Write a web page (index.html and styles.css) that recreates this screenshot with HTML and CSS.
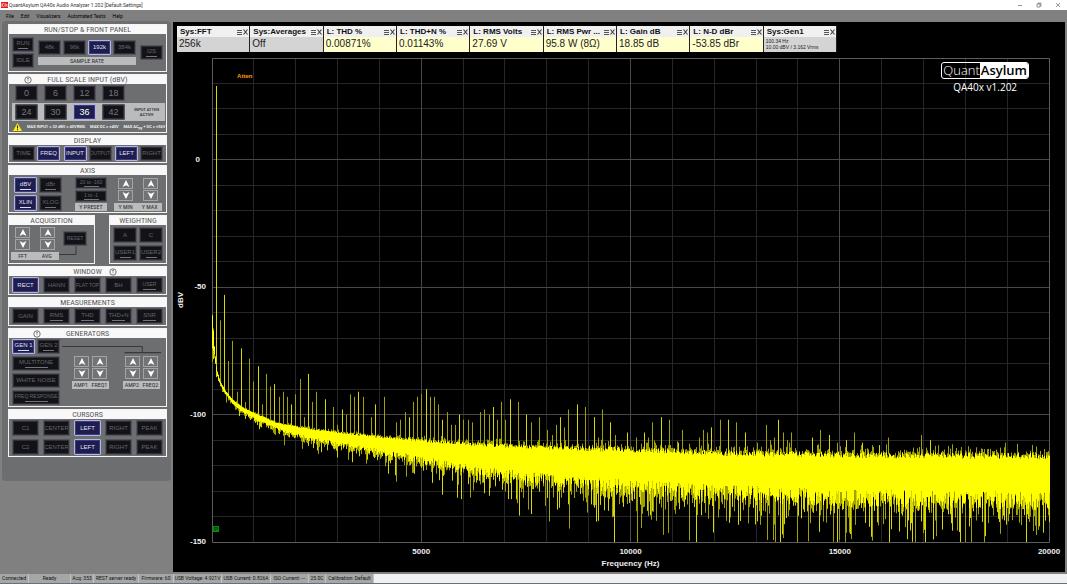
FILE: index.html
```html
<!DOCTYPE html>
<html lang="en">
  <head>
    <meta charset="UTF-8" />
    <meta name="viewport" content="width=device-width, initial-scale=1" />
    <title>QuantAsylum QA40x Audio Analyzer 1.202 [Default.Settings]</title>
    <link rel="stylesheet" href="styles.css" />
  </head>
  <body>
    <!-- shared icons -->
    <svg class="defs" aria-hidden="true">
      <symbol id="up" viewBox="0 0 8 8"><path d="M4 0L8 8L4 6L0 8Z" fill="#fff" /></symbol>
      <symbol id="down" viewBox="0 0 8 8"><path d="M4 8L8 0L4 2L0 0Z" fill="#fff" /></symbol>
      <symbol id="knob" viewBox="0 0 8 8">
        <circle cx="4" cy="4" r="3.2" fill="none" stroke="#666" stroke-width="0.9" />
        <path d="M4 2V5.2M3 2.4H5" stroke="#777" stroke-width="0.7" fill="none" />
      </symbol>
      <symbol id="menuicon" viewBox="0 0 5 6"><path d="M0 1.5H5M0 3.5H5M0 5.5H5" stroke="#555" /></symbol>
      <symbol id="closeicon" viewBox="0 0 5 6"><path d="M0.5 0.5L4.5 5.5M4.5 0.5L0.5 5.5" stroke="#444" stroke-width="1.2" /></symbol>
    </svg>

    <header class="titlebar">
      <svg class="app-icon" viewBox="0 0 7 6" aria-hidden="true">
        <rect width="7" height="6" fill="#e01818" />
        <path d="M1 1V5M1 3L3 1M1 3L3 5M4 1V5M6 2V5M4 3H6" stroke="#fff" stroke-width="0.6" fill="none" />
      </svg>
      <span class="app-title">QuantAsylum QA40x Audio Analyzer 1.202 [Default.Settings]</span>
      <button class="win" aria-label="Minimize"><svg viewBox="0 0 6 6"><path d="M1 3.5H5" /></svg></button>
      <button class="win" aria-label="Restore"><svg viewBox="0 0 6 6"><path d="M1 2H4V5H1ZM2 2V1H5V4H4" /></svg></button>
      <button class="win" aria-label="Close"><svg viewBox="0 0 6 6"><path d="M1 1L5 5M5 1L1 5" /></svg></button>
    </header>

    <nav class="menubar">
      <a href="#">File</a>
      <a href="#">Edit</a>
      <a href="#">Visualizers</a>
      <a href="#">Automated Tests</a>
      <a href="#">Help</a>
    </nav>

    <main class="workspace">
      <aside class="sidebar">
        <section class="group">
          <h2><span>RUN/STOP &amp; FRONT PANEL</span></h2>
          <div class="body run">
            <div class="stack">
              <button class="btn led">RUN</button>
              <button class="btn">IDLE</button>
            </div>
            <div class="rates">
              <button class="btn">48k</button>
              <button class="btn">96k</button>
              <button class="btn on">192k</button>
              <button class="btn">384k</button>
              <span class="tag">SAMPLE RATE</span>
            </div>
            <button class="btn led">I2S</button>
          </div>
        </section>

        <section class="group">
          <h2><svg class="knob"><use href="#knob" /></svg><span>FULL SCALE INPUT (dBV)</span></h2>
          <div class="body full">
            <div class="ranges">
              <button class="btn big">0</button>
              <button class="btn big">6</button>
              <button class="btn big">12</button>
              <button class="btn big">18</button>
            </div>
            <div class="ranges atten">
              <button class="btn big">24</button>
              <button class="btn big">30</button>
              <button class="btn big on">36</button>
              <button class="btn big">42</button>
              <span class="atten-note">INPUT ATTEN<br />ACTIVE</span>
            </div>
            <div class="warning">
              <svg viewBox="0 0 9 8"><path d="M4.5 0L9 8H0Z" fill="#ffef00" /><path d="M4.5 2.5V5.5M4.5 6.2V7.2" stroke="#222" /></svg>
              <span>MAX INPUT = 32 dBV = 40VRMS</span>
              <span>MAX DC = ±40V</span>
              <span>MAX AC<sub>PK</sub> + DC = ±56V</span>
            </div>
          </div>
        </section>

        <section class="group">
          <h2><span>DISPLAY</span></h2>
          <div class="body display">
            <div class="pair"><button class="btn">TIME</button><button class="btn on">FREQ</button></div>
            <div class="pair"><button class="btn on">INPUT</button><button class="btn small">OUTPUT</button></div>
            <div class="pair"><button class="btn on">LEFT</button><button class="btn">RIGHT</button></div>
          </div>
        </section>

        <section class="group">
          <h2><span>AXIS</span></h2>
          <div class="body axis">
            <div class="quad">
              <button class="btn on led">dBV</button>
              <button class="btn led">dBr</button>
              <button class="btn on led">XLIN</button>
              <button class="btn led">XLOG</button>
            </div>
            <div class="presets">
              <button class="btn led">20 to -160</button>
              <button class="btn led">1 to -1</button>
              <span class="tag">Y PRESET</span>
            </div>
            <div class="spinners wide">
              <button class="arrow" aria-label="Y min up"><svg><use href="#up" /></svg></button>
              <button class="arrow" aria-label="Y max up"><svg><use href="#up" /></svg></button>
              <button class="arrow" aria-label="Y min down"><svg><use href="#down" /></svg></button>
              <button class="arrow" aria-label="Y max down"><svg><use href="#down" /></svg></button>
              <span class="tag"><i>Y MIN</i><i>Y MAX</i></span>
            </div>
          </div>
        </section>

        <div class="split">
          <section class="group">
            <h2><span>ACQUISITION</span></h2>
            <div class="body acq">
              <div class="spinners wide">
                <button class="arrow" aria-label="FFT up"><svg><use href="#up" /></svg></button>
                <button class="arrow" aria-label="Averages up"><svg><use href="#up" /></svg></button>
                <button class="arrow" aria-label="FFT down"><svg><use href="#down" /></svg></button>
                <button class="arrow" aria-label="Averages down"><svg><use href="#down" /></svg></button>
                <span class="tag"><i>FFT</i><i>AVG</i></span>
              </div>
              <div class="reset">
                <button class="btn small">RESET</button>
                <svg class="wire" viewBox="0 0 28 12"><path d="M17 0V8.5H0" /></svg>
              </div>
            </div>
          </section>
          <section class="group">
            <h2><span>WEIGHTING</span></h2>
            <div class="body weighting">
              <button class="btn">A</button>
              <button class="btn">C</button>
              <button class="btn led">USER1</button>
              <button class="btn led">USER2</button>
            </div>
          </section>
        </div>

        <section class="group">
          <h2><span>WINDOW</span><svg class="knob after"><use href="#knob" /></svg></h2>
          <div class="body five">
            <button class="btn on">RECT</button>
            <button class="btn">HANN</button>
            <button class="btn small">FLAT TOP</button>
            <button class="btn">BH</button>
            <button class="btn small led">USER</button>
          </div>
        </section>

        <section class="group">
          <h2><span>MEASUREMENTS</span></h2>
          <div class="body five">
            <button class="btn">GAIN</button>
            <button class="btn led">RMS</button>
            <button class="btn led">THD</button>
            <button class="btn led">THD+N</button>
            <button class="btn led">SNR</button>
          </div>
        </section>

        <section class="group">
          <h2><svg class="knob"><use href="#knob" /></svg><span>GENERATORS</span></h2>
          <div class="body generators">
            <div class="gen-buttons">
              <button class="btn on led">GEN 1</button>
              <button class="btn led">GEN 2</button>
              <button class="btn led long">MULTITONE</button>
              <button class="btn long">WHITE NOISE</button>
              <button class="btn led small long">FREQ RESPONSE</button>
            </div>
            <div class="gen-levels">
              <svg class="wire" viewBox="0 0 102 15"><path d="M2 7.5H81.5V13.5M64 13.5H100" /></svg>
              <div class="levels">
                <div class="spinners">
                  <button class="arrow" aria-label="Amp 1 up"><svg><use href="#up" /></svg></button>
                  <button class="arrow" aria-label="Freq 1 up"><svg><use href="#up" /></svg></button>
                  <button class="arrow" aria-label="Amp 1 down"><svg><use href="#down" /></svg></button>
                  <button class="arrow" aria-label="Freq 1 down"><svg><use href="#down" /></svg></button>
                  <span class="tag"><i>AMP1</i><i>FREQ1</i></span>
                </div>
                <div class="spinners">
                  <button class="arrow" aria-label="Amp 2 up"><svg><use href="#up" /></svg></button>
                  <button class="arrow" aria-label="Freq 2 up"><svg><use href="#up" /></svg></button>
                  <button class="arrow" aria-label="Amp 2 down"><svg><use href="#down" /></svg></button>
                  <button class="arrow" aria-label="Freq 2 down"><svg><use href="#down" /></svg></button>
                  <span class="tag"><i>AMP2</i><i>FREQ2</i></span>
                </div>
              </div>
            </div>
          </div>
        </section>

        <section class="group">
          <h2><span>CURSORS</span></h2>
          <div class="body five">
            <button class="btn">C1</button>
            <button class="btn">CENTER</button>
            <button class="btn on">LEFT</button>
            <button class="btn">RIGHT</button>
            <button class="btn">PEAK</button>
            <button class="btn">C2</button>
            <button class="btn">CENTER</button>
            <button class="btn on">LEFT</button>
            <button class="btn">RIGHT</button>
            <button class="btn">PEAK</button>
          </div>
        </section>
      </aside>

      <section class="display-area">
        <div class="meters" id="meters"></div>
        <svg class="chart" id="chart" role="img" aria-label="Spectrum, dBV over frequency"></svg>
        <div class="brand">
          <div class="logo"><span>Quant</span><b>Asylum</b></div>
          <div class="version">QA40x v1.202</div>
        </div>
      </section>
    </main>

    <footer class="statusbar">
      <div class="cells">
        <span>Connected</span>
        <span>Ready</span>
        <span>Acq: 353</span>
        <span>REST server ready</span>
        <span>Firmware: 60</span>
        <span>USB Voltage: 4.921V</span>
        <span>USB Current: 0.826A</span>
        <span>ISO Current: ---</span>
        <span>25.0C</span>
        <span>Calibration: Default</span>
      </div>
    </footer>

    <script src="chart.js"></script>
  </body>
</html>
```
FILE: styles.css
```css
* {
  box-sizing: border-box;
}

body {
  margin: 0;
  min-height: 100vh;
  display: flex;
  flex-direction: column;
  background: #808080;
  font-family: Roboto, "Liberation Sans", sans-serif;
  font-size: 5px;
  color: #111;
}

button {
  font: inherit;
  padding: 0;
  margin: 0;
}

.defs {
  display: none;
}

/* window chrome */
.titlebar {
  display: flex;
  align-items: center;
  height: 10px;
  padding: 0 5px 0 1px;
  background: #fff;
}

.app-icon {
  width: 7px;
  height: 6px;
}

.app-title {
  flex: 1;
  margin-left: 1px;
  color: #333;
}

.win {
  width: 8px;
  height: 8px;
  margin-left: 11px;
  border: none;
  background: none;
  display: flex;
  align-items: center;
  justify-content: center;
}

.win svg {
  width: 6px;
  height: 6px;
  fill: none;
  stroke: #555;
  stroke-width: 0.6;
}

.menubar {
  display: flex;
  align-items: center;
  gap: 7px;
  height: 11px;
  padding-left: 6px;
}

.menubar a {
  color: #000;
  text-decoration: none;
}

.workspace {
  flex: 1;
  display: flex;
  align-items: stretch;
}

/* control panel */
.sidebar {
  flex: none;
  align-self: flex-start;
  width: 169px;
  margin: 0 2px;
  padding: 3px 4px 24px 6px;
  display: flex;
  flex-direction: column;
  gap: 2px;
  background: #6c6e70;
  border-radius: 4px;
}

.group {
  border: 1px solid #f4f4f4;
}

.group h2 {
  display: grid;
  grid-template-columns: 1fr auto 1fr;
  align-items: center;
  height: 9px;
  margin: 0;
  background: #f8f8f8;
  color: #58595b;
  font-family: "Roboto Condensed", Roboto, sans-serif;
  font-size: 8px;
  font-weight: 400;
  line-height: 9px;
}

.group h2 span {
  grid-column: 2;
  white-space: nowrap;
}

.knob {
  grid-column: 1;
  grid-row: 1;
  justify-self: center;
  width: 8px;
  height: 8px;
}

.knob.after {
  grid-column: 3;
  justify-self: start;
  margin-left: 7px;
}

.btn {
  height: 15px;
  border: 1px solid #54545e;
  outline: 1px solid #2e2e38;
  outline-offset: -2px;
  border-radius: 1px;
  background: #131317;
  color: #64666c;
  font-family: "Liberation Sans", sans-serif;
  font-size: 6px;
  line-height: 7px;
  white-space: nowrap;
  display: flex;
  flex-direction: column;
  align-items: center;
  justify-content: center;
  overflow: hidden;
  cursor: pointer;
}

.btn.on {
  border-color: #b4b4e4;
  outline-color: #3c3c7c;
  background: #1d1d4e;
  color: #e2e2f4;
}

.btn.led::after {
  content: "";
  width: 50%;
  height: 1px;
  margin-top: 1px;
  background: #74747c;
}

.btn.on.led::after {
  background: #dcdcf4;
}

.btn.small {
  font-size: 5px;
}

.btn.big {
  height: 16px;
  font-size: 9px;
  line-height: 10px;
  color: #74767c;
}

.btn.big.on {
  color: #fff;
}

.tag {
  display: flex;
  align-items: center;
  justify-content: space-around;
  height: 8px;
  background: #b9bbbd;
  color: #2c2e30;
  font-family: "Roboto Condensed", Roboto, sans-serif;
  font-size: 6px;
  line-height: 8px;
}

.tag i {
  font-style: normal;
}

.body {
  padding: 1px 3px;
}

.run {
  display: grid;
  grid-template-columns: 22px 98px 23px;
  justify-content: space-between;
  align-items: center;
  padding: 3px;
}

.stack {
  display: grid;
  gap: 1px;
}

.rates {
  display: grid;
  grid-template-columns: repeat(4, 1fr);
  gap: 2px;
}

.rates .tag {
  grid-column: 1 / -1;
}

.full {
  display: grid;
  gap: 2px;
}

.ranges {
  display: grid;
  grid-template-columns: repeat(4, 23px) 1fr;
  column-gap: 6px;
  padding: 0 3px;
}

.atten {
  padding: 1px 3px;
  background: #b9bbbd;
}

.atten-note {
  align-self: center;
  justify-self: center;
  text-align: center;
  white-space: nowrap;
  color: #222;
  font-size: 4px;
  font-weight: 500;
  line-height: 5px;
}

.warning {
  display: flex;
  align-items: center;
  gap: 5px;
  height: 8px;
  padding-left: 1px;
  color: #fff;
  font-size: 4px;
  font-weight: 500;
  line-height: 8px;
  white-space: nowrap;
}

.warning svg {
  flex: none;
  width: 9px;
  height: 8px;
}

.warning sub {
  font-size: 3px;
  line-height: 1px;
}

.display {
  display: flex;
  justify-content: space-between;
}

.pair {
  display: grid;
  grid-template-columns: 23px 23px;
  gap: 2px;
}

.axis {
  display: flex;
  align-items: center;
  padding: 2px 4px 1px 5px;
}

.quad {
  display: grid;
  grid-template-columns: 23px 23px;
  gap: 2px;
}

.quad .btn {
  height: 16px;
}

.presets {
  display: grid;
  gap: 1px;
  width: 32px;
  margin-left: 13px;
}

.presets .btn {
  height: 12px;
  font-size: 5px;
  line-height: 6px;
}

.spinners {
  display: grid;
  grid-template-columns: 15px 15px;
  justify-content: center;
  gap: 1px 3px;
  width: 37px;
}

.spinners.wide {
  width: 48px;
  column-gap: 10px;
}

.axis .spinners {
  margin-left: auto;
}

/* the label strip runs a little past the arrows on both sides */
.spinners .tag {
  grid-column: 1 / -1;
  margin: 1px -2px 0;
}

.spinners.wide .tag {
  margin: 1px -4px 0;
}

.arrow {
  display: flex;
  align-items: center;
  justify-content: center;
  height: 11px;
  border: 1px solid #a2a4a6;
  background: #717375;
  cursor: pointer;
}

.arrow svg {
  width: 8px;
  height: 7px;
}

.split {
  display: grid;
  grid-template-columns: 87px 58px;
  justify-content: space-between;
}

.acq {
  display: flex;
  padding: 2px;
}

.reset {
  width: 28px;
  padding-top: 4px;
}

.reset .btn {
  width: 24px;
  margin-left: 4px;
}

.wire {
  display: block;
  width: 100%;
  fill: none;
  stroke: #38393b;
}

.weighting {
  display: grid;
  grid-template-columns: 1fr 1fr;
  gap: 2px;
  padding: 2px 3px;
}

.weighting .btn {
  height: 16px;
}

.five {
  display: grid;
  grid-template-columns: repeat(5, 1fr);
  gap: 3px 4px;
}

.five .btn {
  height: 16px;
}

.generators {
  display: grid;
  grid-template-columns: 48px 1fr;
}

.gen-buttons {
  display: grid;
  grid-template-columns: 1fr 1fr;
  gap: 2px;
}

.gen-buttons .long {
  grid-column: 1 / -1;
}

.levels {
  display: flex;
  justify-content: space-between;
  padding: 2px 3px 0 12px;
}

/* measurements and plot */
.display-area {
  position: relative;
  flex: 1;
  min-width: 0;
  margin: 1px 2px 2px 0;
  display: flex;
  flex-direction: column;
  background: #000;
}

.meters {
  display: grid;
  grid-template-columns: repeat(9, minmax(0, 74fr)) 227fr;
  padding: 4px 3px 0 4px;
}

.meter {
  height: 26px;
  background: #ffffcc;
  border-right: 1px solid #222;
  font-family: "Liberation Sans", sans-serif;
}

.meter.sys {
  background: #d4d4d4;
}

.meter-head {
  display: flex;
  align-items: center;
  gap: 1px;
  height: 11px;
  padding: 0 1px 0 3px;
  background: #f0f0f0;
  font-size: 8px;
  font-weight: 700;
  line-height: 11px;
  white-space: nowrap;
}

.meter-head span {
  flex: 1;
}

.meter-head button {
  display: flex;
  border: none;
  background: none;
}

.meter-head svg {
  width: 5px;
  height: 6px;
}

.meter-value {
  padding-left: 2px;
  font-size: 10px;
  line-height: 13px;
  color: #222;
}

.meter-value.fine {
  font-size: 5px;
  line-height: 6px;
  padding-top: 1px;
}

.chart {
  flex: 1;
  width: 100%;
  min-height: 200px;
  display: block;
  font-family: "Liberation Sans", sans-serif;
  font-size: 8px;
  font-weight: 700;
}

.chart text {
  fill: #eee;
}

.chart .grid {
  stroke: #262626;
}

.chart .grid.major {
  stroke: #484848;
}

.chart .grid.frame {
  stroke: #5c5c5c;
}

.chart .band {
  stroke: #ffff00;
}

.chart .tail {
  stroke: #a0a000;
}

.chart .tail.bright {
  stroke: #d8d800;
}

.chart .marker {
  fill: #008c10;
}

.chart .marker-text {
  fill: #003c00;
  font-size: 6px;
}

.chart .notice {
  fill: #ff9a00;
  font-size: 6px;
}

.brand {
  position: absolute;
  top: 40px;
  right: 36px;
  color: #fff;
  font-family: "Open Sans", "Noto Sans", sans-serif;
}

.logo {
  display: flex;
  border: 1px solid #fff;
  border-radius: 3px;
  overflow: hidden;
  font-size: 13px;
  line-height: 15px;
}

.logo span {
  padding-left: 1px;
  font-weight: 300;
}

.logo b {
  padding: 0 1px;
  background: #fff;
  color: #000;
  font-weight: 600;
}

.version {
  font-size: 10px;
  line-height: 16px;
  text-align: center;
}

.statusbar {
  height: 10px;
  background: #f0f0f0;
  border-bottom: 1px solid #66707c;
}

.cells {
  display: grid;
  grid-template-columns: 29px 42px 23px 45px 35px 48px 49px 38px 17px 48px;
  width: 374px;
  height: 9px;
  background: #a6a6a6;
}

.cells span {
  overflow: hidden;
  border-right: 1px solid #c4c4c4;
  line-height: 9px;
  text-align: center;
  white-space: nowrap;
}
```
FILE: chart.js
```js
const meters = [
  { name: "Sys:FFT", value: "256k", sys: true },
  { name: "Sys:Averages", value: "Off", sys: true },
  { name: "L: THD %", value: "0.00871%" },
  { name: "L: THD+N %", value: "0.01143%" },
  { name: "L: RMS Volts", value: "27.69 V" },
  { name: "L: RMS Pwr ...", value: "95.8 W (8Ω)" },
  { name: "L: Gain dB", value: "18.85 dB" },
  { name: "L: N-D dBr", value: "-53.85 dBr" },
  { name: "Sys:Gen1", value: "100.34 Hz<br>10.00 dBV / 3.162 Vrms", sys: true, fine: true },
];

document.getElementById("meters").innerHTML = meters
  .map(
    (m) => `<div class="meter${m.sys ? " sys" : ""}">
      <div class="meter-head"><span>${m.name}</span>
        <button aria-label="${m.name} options"><svg><use href="#menuicon" /></svg></button>
        <button aria-label="Close ${m.name}"><svg><use href="#closeicon" /></svg></button>
      </div>
      <div class="meter-value${m.fine ? " fine" : ""}">${m.value}</div>
    </div>`
  )
  .join("");

// noise floor: [Hz, upper edge dBV, lower edge dBV]
const floor = [
  [0, -60, -72], [50, -74, -77], [100, -82, -84], [190, -87, -88.5],
  [310, -90.5, -92], [480, -94, -95.5], [715, -97, -99], [1030, -99.5, -102],
  [1500, -103, -105.5], [2300, -105.5, -109.5], [3100, -107, -112],
  [3900, -108.5, -114.5], [5000, -110, -118], [6200, -111.5, -122],
  [7600, -112.5, -125], [10000, -113.5, -129], [12400, -115, -131],
  [15300, -115.5, -133], [20000, -116, -134],
];

// harmonics of the 100 Hz tone: number -> dBV
const harmonics = {
  1: 29, 2: -63, 3: -53, 4: -79, 5: -71, 6: -91, 7: -74, 8: -95, 9: -78, 10: -87,
  11: -81, 12: -96, 13: -84, 14: -89, 15: -88, 16: -93, 17: -91, 18: -93, 19: -96,
  20: -92, 21: -86, 22: -101, 23: -84, 24: -95, 25: -91, 27: -94, 29: -97, 30: -104,
  31: -98, 32: -100, 33: -92, 34: -93, 35: -91, 36: -93, 38: -101, 39: -96, 41: -93,
  44: -103, 45: -102, 46: -99, 47: -101, 48: -95, 49: -93, 50: -92, 51: -90, 52: -93,
  53: -93, 54: -96, 55: -102, 56: -99, 57: -104, 58: -104, 59: -100, 60: -102,
  61: -102, 62: -103, 64: -99, 65: -98, 66: -100, 67: -97, 68: -102, 69: -95,
  70: -102, 71: -94, 73: -95, 75: -100, 76: -103, 78: -101, 80: -106, 81: -108,
  82: -104, 83: -101, 84: -105, 85: -98, 87: -96, 89: -97, 91: -101, 92: -109,
  93: -98, 95: -103, 96: -108, 99: -107, 101: -109, 103: -107, 104: -109, 105: -103,
  107: -101, 109: -102, 111: -111, 112: -106, 116: -109, 117: -106, 118: -107,
  119: -105, 121: -102, 123: -102, 125: -103, 127: -107, 130: -111, 132: -104,
  133: -110, 134: -109, 135: -102, 136: -107, 137: -110, 138: -107, 143: -109,
  145: -106, 147: -108, 149: -111, 151: -110, 153: -107, 155: -111, 159: -112,
  161: -109, 169: -108, 171: -110, 173: -112, 189: -111,
};

const chart = document.getElementById("chart");
const margin = { left: 39, right: 16, top: 6, bottom: 30 };

function floorAt(hz) {
  let i = 1;
  while (i < floor.length - 1 && floor[i][0] < hz) i++;
  const a = floor[i - 1];
  const b = floor[i];
  const t = (hz - a[0]) / (b[0] - a[0]);
  return [a[1] + (b[1] - a[1]) * t, a[2] + (b[2] - a[2]) * t];
}

function draw() {
  const w = chart.clientWidth;
  const h = chart.clientHeight;
  const right = w - margin.right;
  const bottom = h - margin.bottom;
  const x = (hz) => margin.left + ((right - margin.left) * hz) / 20000;
  const y = (db) => margin.top + ((bottom - margin.top) * (40 - db)) / 190;
  const snap = (v) => Math.floor(v) + 0.5;

  // seeded, so that a resize keeps the same trace
  let seed = 7;
  const rand = () => (seed = (seed * 16807) % 2147483647) / 2147483647;

  let minor = "";
  let major = "";
  for (let hz = 1000; hz < 20000; hz += 1000) {
    const line = `M${snap(x(hz))} ${margin.top}V${bottom}`;
    if (hz % 5000) minor += line;
    else major += line;
  }
  for (let db = 30; db > -150; db -= 10) {
    const line = `M${margin.left} ${snap(y(db))}H${right}`;
    if (db % 50) minor += line;
    else major += line;
  }
  const frame = `M${snap(margin.left)} ${snap(margin.top)}H${snap(right)}V${snap(bottom)}H${snap(margin.left)}Z`;

  let band = "";
  let dim = "";
  let bright = "";
  for (let px = margin.left; px <= right; px++) {
    const hz = ((px - margin.left) / (right - margin.left)) * 20000;
    const [hi, lo] = floorAt(hz);
    const spread = hi - lo;
    const top = hi + (rand() - 0.6) * spread * 0.14;
    const low = lo - (rand() - 0.5) * spread * 0.4;
    band += `M${px + 0.5} ${y(top).toFixed(1)}V${y(low).toFixed(1)}`;
    dim += `M${px + 0.5} ${y(top + rand() * rand() * spread * 0.25).toFixed(1)}V${y(top).toFixed(1)}`;
    const end = Math.max(-150, low + Math.log(1 - rand()) * spread * 0.34);
    const tail = `M${px + 0.5} ${y(low).toFixed(1)}V${y(end).toFixed(1)}`;
    if (rand() < 0.55) dim += tail;
    else bright += tail;
  }
  for (const n in harmonics) {
    const hz = n * 100.34;
    const line = `M${snap(x(hz))} ${y(harmonics[n]).toFixed(1)}V${y(floorAt(hz)[0]).toFixed(1)}`;
    if (n == 1 || n % 4 == 3) bright += line;
    else dim += line;
  }

  let labels = "";
  for (const db of [0, -50, -100, -150]) {
    labels += `<text x="${margin.left - 6 - (db ? 0 : 6)}" y="${y(db) + 2}" text-anchor="end">${db}</text>`;
  }
  for (const hz of [5000, 10000, 15000, 20000]) {
    labels += `<text x="${x(hz)}" y="${bottom + 12}" text-anchor="middle">${hz}</text>`;
  }
  const midX = (margin.left + right) / 2;
  const midY = (margin.top + bottom) / 2;
  labels += `<text x="${midX}" y="${bottom + 24}" text-anchor="middle">Frequency (Hz)</text>`;
  labels += `<text transform="translate(10 ${midY}) rotate(-90)" text-anchor="middle">dBV</text>`;

  chart.innerHTML = `
    <path class="grid" d="${minor}" />
    <path class="grid major" d="${major}" />
    <path class="grid frame" d="${frame}" fill="none" />
    <path class="tail" d="${dim}" />
    <path class="tail bright" d="${bright}" />
    <path class="band" d="${band}" />
    <rect class="marker" x="${margin.left + 1}" y="${bottom - 16}" width="6" height="6" />
    <text class="marker-text" x="${margin.left + 2}" y="${bottom - 11}">P</text>
    <text class="notice" x="${x(600)}" y="${y(32)}">Atten</text>
    ${labels}`;
}

draw();
window.addEventListener("resize", draw);
```
